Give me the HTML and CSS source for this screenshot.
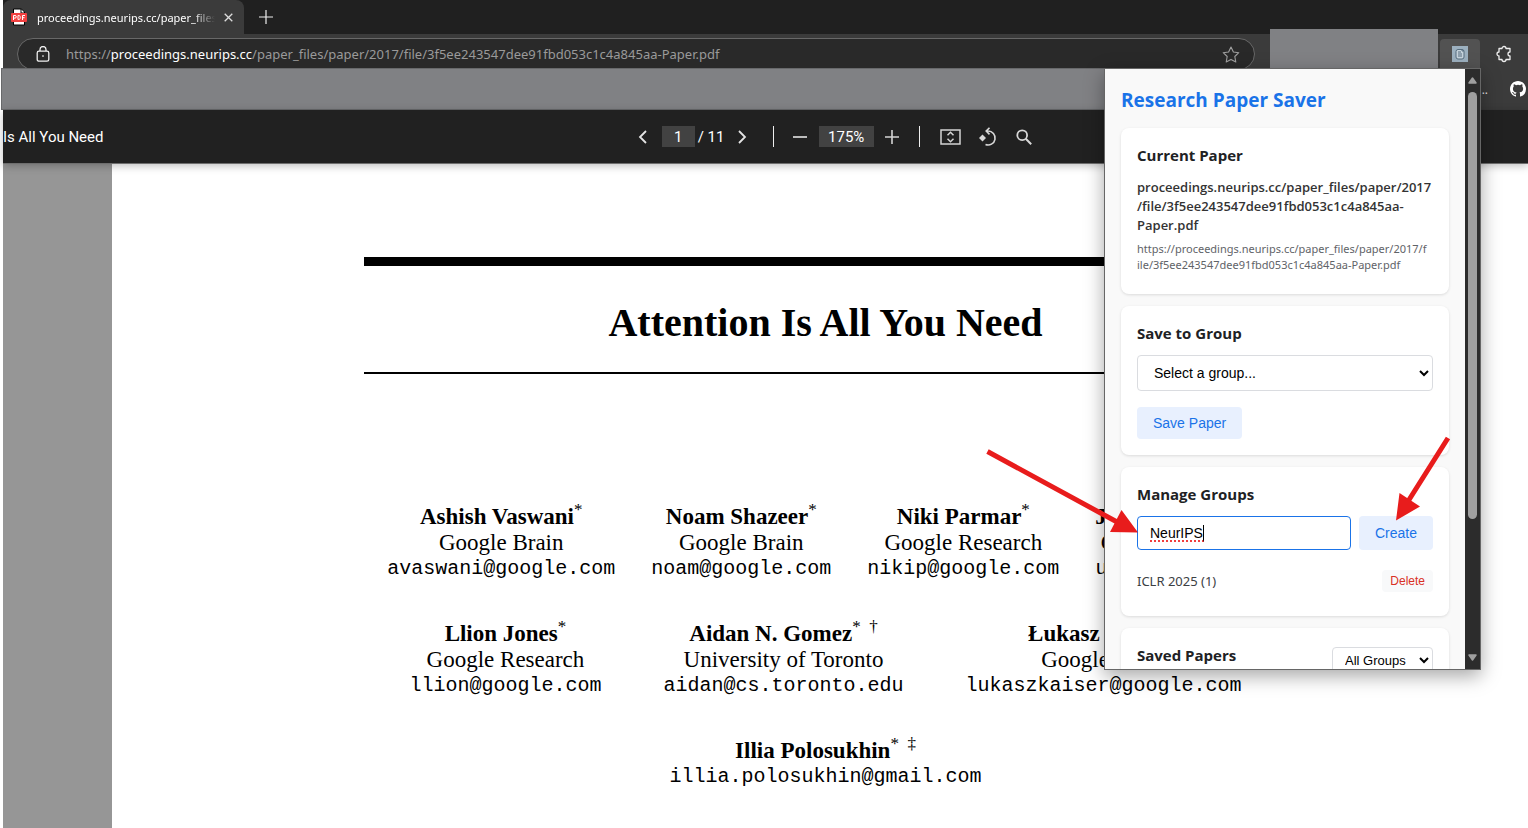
FILE: index.html
```html
<!DOCTYPE html>
<html lang="en">
<head>
<meta charset="utf-8">
<title>Attention Is All You Need</title>
<link rel="stylesheet" href="styles.css">
</head>
<body>
<div class="browser">
  <header class="tab-strip">
    <div class="tab">
      <svg class="pdf-icon" width="16" height="18" viewBox="0 0 16 18" aria-hidden="true">
        <path d="M2.5 1h8l3 3v13h-11z" fill="#fff" stroke="#000"/>
        <path d="M10 1v4h4" fill="none" stroke="#000"/>
        <rect x="0" y="5" width="16" height="9" rx="1" fill="#f23f3f"/>
        <path d="M2.5 12V7.500h1.500a1.300 1.300 0 0 1 0 2.600H2.500M7 7.500v4h.8c2 0 2-4 0-4zM11.500 12V7.500H14M11.500 9.700h2" fill="none" stroke="#fff"/>
      </svg>
      <span class="tab-title">proceedings.neurips.cc/paper_files</span>
      <button class="icon-button tab-close" aria-label="Close tab"><svg width="9" height="9" viewBox="0 0 9 9"><path d="M.7.7l7.600 7.600M8.300.7L.7 8.300" stroke="#ddd" stroke-width="1.300"/></svg></button>
    </div>
    <button class="icon-button new-tab" aria-label="New tab"><svg width="14" height="14" viewBox="0 0 14 14"><path d="M7 0v14M0 7h14" stroke="#eee" stroke-width="1.200"/></svg></button>
  </header>
  <div class="address-row">
    <div class="omnibox">
      <svg width="14" height="16" viewBox="0 0 14 16" fill="none" stroke="#eee" stroke-width="1.300" aria-hidden="true"><rect x="1.200" y="5.200" width="11.600" height="10" rx="1.800"/><path d="M4 5V3.500a3 3 0 0 1 6 0V5"/><circle cx="7" cy="10" r=".6" fill="#eee" stroke-width=".5"/></svg>
      <span class="url">https://<b>proceedings.neurips.cc</b>/paper_files/paper/2017/file/3f5ee243547dee91fbd053c1c4a845aa-Paper.pdf</span>
      <button class="icon-button" aria-label="Add to favorites"><svg width="18" height="17" viewBox="0 0 18 17"><path d="M9 1l2.400 5 5.400.7-4 3.800 1 5.500L9 13.400 4.200 16l1-5.500-4-3.800L6.600 6z" fill="none" stroke="#a0a0a0" stroke-width="1.100" stroke-linejoin="round"/></svg></button>
    </div>
    <div class="blank-block"></div>
    <button class="extension-button" aria-label="Research Paper Saver"><svg width="16" height="16" viewBox="0 0 16 16"><rect width="16" height="16" fill="#9cb0bf"/><rect x="4" y="3.500" width="8" height="9.500" rx="2" fill="#c6d3dc" stroke="#566d7e"/><path d="M6 6h3M6 8h4M6 10h4M10 3v2h2" fill="none" stroke="#566d7e"/></svg></button>
    <button class="icon-button puzzle" aria-label="Extensions"><svg width="16" height="18" viewBox="0 0 16 18"><path d="M3 3.500h3a2 2 0 0 1 4 0h4v3.500a2 2 0 0 0 0 4v3.500h-4a2 2 0 0 1-4 0H3v-3.500a2 2 0 0 1 0-4z" fill="none" stroke="#eee" stroke-width="1.300" stroke-linejoin="round"/></svg></button>
  </div>
  <div class="favorites-row">
    <div class="blank-bar"></div>
    <span class="more">..</span>
    <svg class="github" width="16" height="16" viewBox="0 0 16 16" aria-hidden="true"><path fill="#fff" d="M8 0C3.580 0 0 3.580 0 8c0 3.540 2.290 6.530 5.470 7.590.4.070.55-.17.55-.38 0-.19-.01-.82-.01-1.490-2.010.37-2.530-.49-2.690-.94-.09-.23-.48-.94-.82-1.130-.28-.15-.68-.52-.01-.53.63-.01 1.080.58 1.230.82.72 1.210 1.870.87 2.330.66.07-.52.28-.87.51-1.070-1.780-.2-3.640-.89-3.640-3.950 0-.87.31-1.590.82-2.150-.08-.2-.36-1.020.08-2.120 0 0 .67-.21 2.200.82a7.500 7.500 0 0 1 4 0c1.530-1.040 2.200-.82 2.200-.82.44 1.100.16 1.920.08 2.120.51.56.82 1.270.82 2.150 0 3.070-1.870 3.750-3.650 3.950.29.25.54.73.54 1.480 0 1.070-.01 1.930-.01 2.200 0 .21.15.46.55.38A8 8 0 0 0 16 8c0-4.420-3.580-8-8-8z"/></svg>
  </div>
  <div class="pdf-toolbar">
    <div class="pdf-title">Is All You Need</div>
    <div class="pdf-controls">
      <button class="icon-button prev" aria-label="Previous page"><svg width="9" height="14" viewBox="0 0 9 14"><path d="M8 1L2 7l6 6" fill="none" stroke="#e4e4e4" stroke-width="1.800"/></svg></button>
      <input class="page-number" type="text" value="1" aria-label="Page number">
      <span class="page-total">/ 11</span>
      <button class="icon-button next" aria-label="Next page"><svg width="9" height="14" viewBox="0 0 9 14"><path d="M1 1l6 6-6 6" fill="none" stroke="#e4e4e4" stroke-width="1.800"/></svg></button>
      <span class="separator"></span>
      <button class="icon-button zoom-out" aria-label="Zoom out"><svg width="14" height="14" viewBox="0 0 14 14"><path d="M0 7h14" stroke="#e4e4e4" stroke-width="1.600"/></svg></button>
      <input class="zoom-level" type="text" value="175%" aria-label="Zoom level">
      <button class="icon-button zoom-in" aria-label="Zoom in"><svg width="14" height="14" viewBox="0 0 14 14"><path d="M0 7h14M7 0v14" stroke="#d4d4d4" stroke-width="1.600"/></svg></button>
      <span class="separator"></span>
      <button class="icon-button fit" aria-label="Fit to page"><svg width="21" height="16" viewBox="0 0 21 16" fill="none" stroke="#d4d4d4" stroke-width="1.500"><rect x="1" y="1" width="19" height="14"/><path d="M7.500 6.300l3-3 3 3M7.500 9.700l3 3 3-3"/></svg></button>
      <button class="icon-button rotate" aria-label="Rotate"><svg width="18" height="20" viewBox="0 0 18 20"><path d="M7.500 4H9a7 7 0 1 1-2.500 13.500M10.500.8L7.200 4.100l3.300 3.300" fill="none" stroke="#d8d8d8" stroke-width="1.600"/><path d="M3.500 7.500L7 11l-3.500 3.500L0 11z" fill="#d8d8d8"/></svg></button>
      <button class="icon-button" aria-label="Search"><svg width="16" height="16" viewBox="0 0 16 16"><circle cx="6.200" cy="6.200" r="4.900" fill="none" stroke="#d8d8d8" stroke-width="1.800"/><path d="M9.800 9.800l5.400 5.400" stroke="#d8d8d8" stroke-width="2"/></svg></button>
    </div>
  </div>
  <main class="viewer">
    <article class="paper">
      <h1 class="paper-title">Attention Is All You Need</h1>
      <div class="authors">
        <div class="author-row">
          <div class="author"><span class="name">Ashish Vaswani<sup>*</sup></span><span class="org">Google Brain</span><span class="mail">avaswani@google.com</span></div>
          <div class="author"><span class="name">Noam Shazeer<sup>*</sup></span><span class="org">Google Brain</span><span class="mail">noam@google.com</span></div>
          <div class="author"><span class="name">Niki Parmar<sup>*</sup></span><span class="org">Google Research</span><span class="mail">nikip@google.com</span></div>
          <div class="author"><span class="name">Jakob Uszkoreit<sup>*</sup></span><span class="org">Google Research</span><span class="mail">usz@google.com</span></div>
        </div>
        <div class="author-row wide">
          <div class="author"><span class="name">Llion Jones<sup>*</sup></span><span class="org">Google Research</span><span class="mail">llion@google.com</span></div>
          <div class="author"><span class="name">Aidan N. Gomez<sup>* &nbsp;†</sup></span><span class="org">University of Toronto</span><span class="mail">aidan@cs.toronto.edu</span></div>
          <div class="author"><span class="name">Łukasz Kaiser<sup>*</sup></span><span class="org">Google Brain</span><span class="mail">lukaszkaiser@google.com</span></div>
        </div>
        <div class="author-row">
          <div class="author"><span class="name">Illia Polosukhin<sup>* &nbsp;‡</sup></span><span class="mail">illia.polosukhin@gmail.com</span></div>
        </div>
      </div>
    </article>
  </main>

  <aside class="popup">
    <div class="popup-body">
      <h1 class="popup-title">Research Paper Saver</h1>
      <section class="card">
        <h2>Current Paper</h2>
        <p class="current-title">proceedings.neurips.cc/paper_files/paper/2017<br>/file/3f5ee243547dee91fbd053c1c4a845aa-<br>Paper.pdf</p>
        <p class="current-url">https://proceedings.neurips.cc/paper_files/paper/2017/f<br>ile/3f5ee243547dee91fbd053c1c4a845aa-Paper.pdf</p>
      </section>
      <section class="card">
        <h2><label for="group">Save to Group</label></h2>
        <select id="group" class="group-select"><option>Select a group...</option><option>ICLR 2025</option></select>
        <button class="button">Save Paper</button>
      </section>
      <section class="card">
        <h2><label for="new-group">Manage Groups</label></h2>
        <div class="new-group">
          <div class="field">
            <input id="new-group" type="text" value="NeurIPS">
            <span class="spelling"></span>
          </div>
          <button class="button">Create</button>
        </div>
        <div class="group-item"><span>ICLR 2025 (1)</span><button class="delete">Delete</button></div>
      </section>
      <section class="card">
        <div class="saved-head">
          <h2><label for="filter">Saved Papers</label></h2>
          <select id="filter" class="filter"><option>All Groups</option></select>
        </div>
      </section>
    </div>
    <div class="scrollbar">
      <svg width="9" height="7" viewBox="0 0 9 7"><path d="M4.500 1L8 6H1z" fill="#9f9f9f" stroke="#9f9f9f" stroke-width="1.500" stroke-linejoin="round"/></svg>
      <div class="scroll-track"><div class="thumb"></div></div>
      <svg width="9" height="7" viewBox="0 0 9 7"><path d="M4.500 6L8 1H1z" fill="#9f9f9f" stroke="#9f9f9f" stroke-width="1.500" stroke-linejoin="round"/></svg>
    </div>
    <svg class="arrows" width="500" height="120" viewBox="980 430 500 120" aria-hidden="true">
      <g stroke="#e81c1c" stroke-width="5"><path d="M987.500 451.500L1118 522.500M1448 438L1407 503"/></g>
      <path d="M1121.500 510L1110 532l28 .5zM1399.500 493l20.500 13.500-24 14z" fill="#e81c1c"/>
    </svg>
  </aside>
</div>
</body>
</html>
```

FILE: styles.css
```css
* { box-sizing: border-box; }

body {
  margin: 0;
  background: #fff;
  font-family: "Open Sans", "Noto Sans", sans-serif;
}

button, input, select { font-family: "Liberation Sans", Arial, sans-serif; }

h1, h2, p { margin: 0; }

.browser {
  position: relative;
  display: flex;
  flex-direction: column;
  height: 100vh;
  padding-left: 3px;
  overflow: hidden;
}

.icon-button {
  display: flex;
  flex: none;
  padding: 0;
  border: 0;
  background: none;
}

/* Browser chrome */
.tab-strip {
  display: flex;
  flex: none;
  align-items: center;
  height: 34px;
  background: #202020;
}

.tab {
  display: flex;
  align-items: center;
  width: 241px;
  height: 34px;
  padding: 0 11px 0 8px;
  border-radius: 8px 8px 0 0;
  background: #3b3b3b;
}

.pdf-icon { flex: none; margin-right: 10px; }

.tab-title {
  flex: 1;
  overflow: hidden;
  color: #fff;
  font-family: "Noto Sans", sans-serif;
  font-size: 11px;
  white-space: nowrap;
  mask-image: linear-gradient(to right, #000 88%, transparent);
}

.tab-close { margin-left: 9px; }
.new-tab { margin-left: 15px; }

.address-row {
  display: flex;
  flex: none;
  height: 35px;
  padding: 4px 16px 0 14px;
  background: #3b3b3b;
}

.omnibox {
  display: flex;
  flex: 1;
  align-items: center;
  height: 32px;
  padding: 0 14px 0 18px;
  border: 1px solid #686868;
  border-radius: 16px;
  background: #292929;
}

.url {
  flex: 1;
  margin-left: 16px;
  color: #9a9a9a;
  font-family: "Noto Sans", sans-serif;
  font-size: 13px;
  white-space: nowrap;
}

.url b { color: #fff; font-weight: 400; }

.blank-block {
  width: 168px;
  height: 40px;
  margin: -9px 2px 0 15px;
  background: #808184;
}

.extension-button {
  display: flex;
  align-items: flex-start;
  justify-content: center;
  width: 40px;
  height: 34px;
  margin-top: 1px;
  padding: 7px 0 0;
  border: 0;
  border-radius: 4px;
  background: #525252;
}

.puzzle { margin: 7px 0 0 16px; }

.favorites-row {
  position: relative;
  display: flex;
  flex: none;
  align-items: center;
  height: 42px;
  margin-top: -1px;
  background: #3b3b3b;
}

.blank-bar {
  flex: 1;
  align-self: stretch;
  margin-left: -2px;
  border: 1px solid #68696b;
  background: #808184;
}

.more { margin: 0 22px 0 4px; color: #eee; font-size: 12px; }
.github { margin-right: 2px; }

/* PDF viewer */
.pdf-toolbar {
  position: relative;
  display: grid;
  grid-template-columns: 14fr auto 11fr;
  flex: none;
  align-items: center;
  height: 54px;
  border-bottom: 1px solid #6e6e6e;
  background: #212121;
  box-shadow: 0 2px 8px rgba(0, 0, 0, .25);
  color: #fff;
  font-family: Roboto, "Liberation Sans", sans-serif;
  font-size: 15px;
}

.pdf-controls { display: flex; align-items: center; }

.page-number, .zoom-level {
  height: 21px;
  padding: 0;
  border: 0;
  background: #424242;
  color: #fff;
  font-family: Roboto, "Liberation Sans", sans-serif;
  font-size: 15px;
  text-align: center;
}

.prev { margin: 0 15px 0 3px; }
.page-number { width: 33px; }
.page-total { width: 43px; padding-left: 3px; }
.separator { width: 1px; height: 21px; background: #eee; }
.next { margin-right: 26px; }
.zoom-out { margin: 0 12px 0 19px; }
.zoom-level { width: 55px; }
.zoom-in { margin: 0 20px 0 11px; }
.fit { margin: 0 18px 0 20px; }
.rotate { margin-right: 19px; }

.viewer {
  flex: 1;
  min-height: 0;
  padding-left: 109px;
  overflow: hidden;
  background: #969696;
}

.paper {
  min-height: 100%;
  padding: 93px 241px 0 252px;
  background: #fff;
  color: #000;
  font-family: "Liberation Serif", "Times New Roman", serif;
}

.paper-title {
  padding: 32px 0 24px;
  border-top: 9px solid #000;
  border-bottom: 2px solid #000;
  font-size: 40px;
  line-height: 50px;
  text-align: center;
  white-space: nowrap;
}

.authors {
  display: flex;
  flex-direction: column;
  gap: 39px;
  padding-top: 130px;
}

.author-row { display: flex; justify-content: center; gap: 36px; }
.wide { gap: 62px; }

.author {
  display: flex;
  flex-direction: column;
  align-items: center;
  font-size: 23px;
  line-height: 26px;
  white-space: nowrap;
}

.name { font-weight: 700; }
.name sup {
  font-size: 17px;
  font-weight: 400;
  line-height: 0;
}
.mail {
  font-family: "Liberation Mono", "Courier New", monospace;
  font-size: 20px;
}

/* Extension popup */
.popup {
  position: absolute;
  top: 68px;
  right: 47px;
  display: flex;
  width: 377px;
  height: 602px;
  border: 1px solid #666;
  background: #f9f9f9;
  box-shadow: 0 6px 18px rgba(0, 0, 0, .35);
}

.popup-body { flex: 1; padding: 16px; overflow: hidden; }

.popup-title {
  margin-bottom: 12px;
  color: #1a73e8;
  font-size: 19px;
  line-height: 31px;
}

.card {
  margin-bottom: 12px;
  padding: 16px;
  border-radius: 8px;
  background: #fff;
  box-shadow: 0 1px 3px rgba(0, 0, 0, .12);
}

.card h2 {
  margin-bottom: 10px;
  color: #202124;
  font-size: 15px;
  line-height: 23px;
}

.current-title {
  padding-top: 1px;
  color: #333;
  font-size: 13px;
  font-weight: 600;
  line-height: 19px;
  white-space: nowrap;
}

.current-url {
  margin: 6px 0 5px;
  color: #5f6368;
  font-family: "Noto Sans", sans-serif;
  font-size: 11px;
  line-height: 16px;
  white-space: nowrap;
}

.group-select {
  display: block;
  width: 100%;
  height: 36px;
  margin-bottom: 16px;
  padding: 0 0 0 12px;
  border: 1px solid #dadce0;
  border-radius: 4px;
  background: #fff;
  color: #000;
  font-size: 14px;
}

.button {
  display: block;
  height: 32px;
  padding: 0 16px;
  border: 0;
  border-radius: 4px;
  background: #e8f0fe;
  color: #1a73e8;
  font-size: 14px;
}

.new-group { display: flex; gap: 8px; }
.new-group .button { height: 34px; }

.field { position: relative; flex: 1; }

.field input {
  display: block;
  width: 100%;
  height: 34px;
  padding: 0 12px;
  border: 1px solid #1a73e8;
  border-radius: 4px;
  outline: 0;
  color: #000;
  font-size: 14px;
}

.spelling {
  position: absolute;
  top: 9px;
  left: 13px;
  width: 54px;
  height: 17px;
  border-right: 1px solid #000;
  border-bottom: 2px dotted #f03e3e;
}

.group-item {
  display: flex;
  align-items: center;
  justify-content: space-between;
  margin-top: 16px;
  padding: 4px 0 8px;
  color: #3c4043;
  font-family: "Noto Sans", sans-serif;
  font-size: 13px;
  line-height: 22px;
}

.delete {
  height: 22px;
  padding: 0 8px;
  border: 0;
  border-radius: 4px;
  background: #f8f9fa;
  color: #d93025;
  font-size: 12px;
}

.saved-head {
  display: flex;
  align-items: center;
  justify-content: space-between;
}

.filter {
  width: 101px;
  height: 27px;
  padding: 0 0 0 8px;
  border: 1px solid #dadce0;
  border-radius: 4px;
  background: #fff;
  color: #000;
  font-size: 13px;
}

.scrollbar {
  display: flex;
  flex-direction: column;
  align-items: center;
  width: 15px;
  padding: 8px 0;
  background: #2c2c2c;
}

.scroll-track { flex: 1; width: 9px; padding-top: 8px; }
.thumb { height: 76%; border-radius: 5px; background: #9f9f9f; }

.arrows {
  position: absolute;
  top: 361px;
  left: -125px;
}
```
